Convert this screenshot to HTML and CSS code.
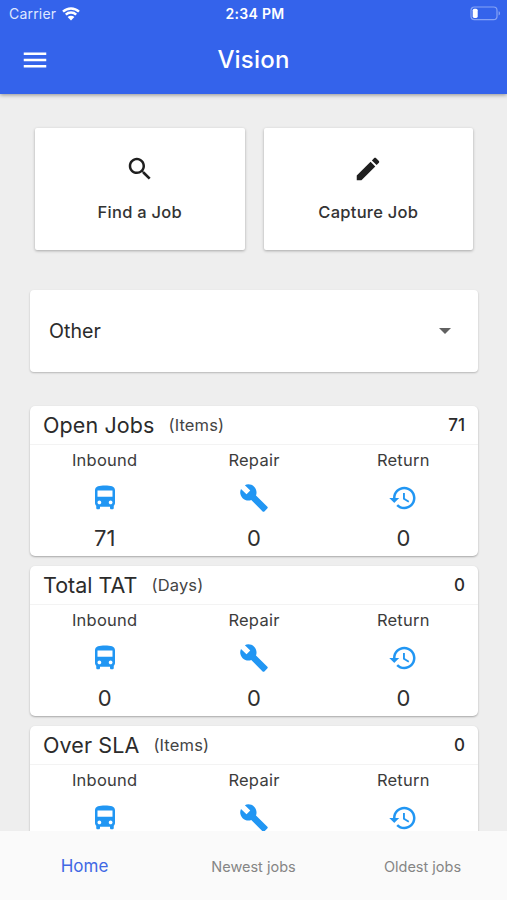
FILE: index.html
```
<!DOCTYPE html>
<html lang="en">
<head>
<meta charset="utf-8">
<title>Vision</title>
<link rel="stylesheet" href="styles.css">
</head>
<body>
<svg class="defs" aria-hidden="true">
  <symbol id="bus" viewBox="0 0 24 24"><path d="M4 16c0 .88.39 1.67 1 2.22V20c0 .55.45 1 1 1h1c.55 0 1-.45 1-1v-1h8v1c0 .55.45 1 1 1h1c.55 0 1-.45 1-1v-1.78c.61-.55 1-1.34 1-2.22V6c0-3.5-3.58-4-8-4s-8 .5-8 4v10zm3.5 1c-.83 0-1.5-.67-1.5-1.5S6.67 14 7.5 14s1.5.67 1.5 1.5S8.33 17 7.5 17zm9 0c-.83 0-1.5-.67-1.5-1.5s.67-1.5 1.5-1.5 1.5.67 1.5 1.5-.67 1.5-1.5 1.5zm1.5-6H6V6h12v5z"/></symbol>
  <symbol id="wrench" viewBox="0 0 24 24"><path d="M22.7 19l-9.1-9.1c.9-2.3.4-5-1.5-6.9-2-2-5-2.4-7.4-1.3L9 6 6 9 1.6 4.7C.4 7.1.9 10.1 2.9 12.1c1.9 1.9 4.6 2.4 6.9 1.5l9.1 9.1c.4.4 1 .4 1.4 0l2.3-2.3c.5-.4.5-1.1.1-1.4z"/></symbol>
  <symbol id="restore" viewBox="0 0 24 24"><path d="M13 3c-4.97 0-9 4.03-9 9H1l3.89 3.89.07.14L9 12H6c0-3.87 3.13-7 7-7s7 3.13 7 7-3.13 7-7 7c-1.93 0-3.68-.79-4.94-2.06l-1.42 1.42C8.27 19.99 10.51 21 13 21c4.97 0 9-4.03 9-9s-4.03-9-9-9zm-1 5v5l4.28 2.54.72-1.21-3.5-2.08V8H12z"/></symbol>
</svg>
<div class="app">
  <header class="top">
    <div class="status">
      <div class="carrier"><span>Carrier</span>
        <svg class="wifi" viewBox="0 0 18 14"><path d="M1 4.7A11.6 11.6 0 0 1 17 4.7M3.8 7.6a7.5 7.5 0 0 1 10.4 0" fill="none" stroke="#fff" stroke-width="2.4"/><path d="M9 13.6 5.6 10.1a4.9 4.9 0 0 1 6.8 0z" fill="#fff"/></svg>
      </div>
      <span class="time">2:34 PM</span>
      <svg class="battery" viewBox="0 0 31 15"><rect x="1" y="1" width="26" height="12.6" rx="3.4" fill="none" stroke="#86a3f5" stroke-width="1.2"/><rect x="2.7" y="2.7" width="5" height="9.2" rx="1.6" fill="#fff"/><path d="M28.6 5.3c1.9.6 1.9 3.6 0 4.2z" fill="#86a3f5"/></svg>
    </div>
    <div class="bar">
      <svg class="icon menu" viewBox="0 0 24 24"><path d="M3 18h18v-2H3v2zm0-5h18v-2H3v2zm0-7v2h18V6H3z"/></svg>
      <h1>Vision</h1>
    </div>
  </header>
  <main class="content">
    <div class="actions">
      <div class="action"><svg class="icon" viewBox="0 0 24 24"><path d="M15.5 14h-.79l-.28-.27C15.41 12.59 16 11.11 16 9.5 16 5.91 13.09 3 9.5 3S3 5.91 3 9.5 5.91 16 9.5 16c1.61 0 3.09-.59 4.23-1.57l.27.28v.79l5 4.99L20.49 19l-4.99-5zm-6 0C7.01 14 5 11.99 5 9.5S7.01 5 9.5 5 14 7.01 14 9.5 11.99 14 9.5 14z"/></svg><span class="find">Find a Job</span></div>
      <div class="action"><svg class="icon" viewBox="0 0 24 24"><path d="M3 17.25V21h3.75L17.81 9.94l-3.75-3.75L3 17.25zM20.71 7.04c.39-.39.39-1.02 0-1.41l-2.34-2.34c-.39-.39-1.02-.39-1.41 0l-1.83 1.83 3.75 3.75 1.83-1.83z"/></svg><span class="capture">Capture Job</span></div>
    </div>
    <div class="select"><span>Other</span><svg class="arrow" viewBox="0 0 12 6"><path d="M0 0h12L6 6z"/></svg></div>
    <div class="cards">
      <section class="card">
        <div class="head"><h2 class="open">Open Jobs</h2><span class="unit">(Items)</span><b>71</b></div>
        <div class="cols">
          <div class="col"><span>Inbound</span><svg class="icon"><use href="#bus"/></svg><em>71</em></div>
          <div class="col"><span>Repair</span><svg class="icon"><use href="#wrench"/></svg><em>0</em></div>
          <div class="col"><span>Return</span><svg class="icon"><use href="#restore"/></svg><em>0</em></div>
        </div>
      </section>
      <section class="card">
        <div class="head"><h2 class="tat">Total TAT</h2><span class="unit">(Days)</span><b>0</b></div>
        <div class="cols">
          <div class="col"><span>Inbound</span><svg class="icon"><use href="#bus"/></svg><em>0</em></div>
          <div class="col"><span>Repair</span><svg class="icon"><use href="#wrench"/></svg><em>0</em></div>
          <div class="col"><span>Return</span><svg class="icon"><use href="#restore"/></svg><em>0</em></div>
        </div>
      </section>
      <section class="card">
        <div class="head"><h2 class="sla">Over SLA</h2><span class="unit">(Items)</span><b>0</b></div>
        <div class="cols">
          <div class="col"><span>Inbound</span><svg class="icon"><use href="#bus"/></svg></div>
          <div class="col"><span>Repair</span><svg class="icon"><use href="#wrench"/></svg></div>
          <div class="col"><span>Return</span><svg class="icon"><use href="#restore"/></svg></div>
        </div>
      </section>
    </div>
  </main>
  <nav class="tabs"><span class="active">Home</span><span>Newest jobs</span><span>Oldest jobs</span></nav>
</div>
</body>
</html>
```
FILE: styles.css
```
* { box-sizing: border-box; }
body { margin: 0; font-family: Inter, "Liberation Sans", sans-serif; color: #2b2b2b; }
h1, h2 { margin: 0; font-weight: 400; }
.defs { display: none; }
.app { width: 507px; height: 900px; display: flex; flex-direction: column; overflow: hidden; background: #eee; }
.icon { width: 30px; height: 30px; display: block; fill: currentColor; flex: none; }

.top { flex: none; height: 94px; background: #3463eb; color: #fff; box-shadow: 0 1px 4px rgba(0,0,0,.4); }
.status { height: 27px; padding: 0 6px 0 9px; display: grid; grid-template-columns: 1fr auto 1fr; align-items: center; font-size: 14px; line-height: 27px; }
.carrier { display: flex; align-items: center; gap: 6px; color: #dfe7ff; letter-spacing: .2px; }
.wifi { width: 18px; height: 14px; }
.time { font-weight: 600; font-size: 14px; letter-spacing: .3px; }
.battery { width: 31px; height: 15px; justify-self: end; }
.bar { height: 66px; display: grid; grid-template-columns: 50px 1fr 50px; align-items: center; padding: 0 20px; }
.bar h1 { text-align: center; font-size: 24px; font-weight: 500; letter-spacing: .2px; line-height: 66px; }

.content { flex: 1; min-height: 0; overflow: hidden; padding: 34px 29px 0 30px; }
.actions { display: flex; gap: 19px; padding: 0 5px; }
.action { flex: 1; height: 122px; padding-top: 26px; display: flex; flex-direction: column; align-items: center; background: #fff; border-radius: 2px; box-shadow: 0 1px 3px rgba(0,0,0,.3); color: #1f1f1f; }
.action span { margin-top: 17px; font-size: 16.5px; font-weight: 500; line-height: 22px; letter-spacing: .25px; color: #333; }
.select { margin-top: 40px; height: 82px; padding: 0 27px 0 19px; display: flex; align-items: center; justify-content: space-between; background: #fff; border-radius: 4px; box-shadow: 0 1px 2px rgba(0,0,0,.24); font-size: 19.6px; }
.arrow { width: 12px; height: 6px; fill: #616161; }

.cards { margin-top: 34px; display: flex; flex-direction: column; gap: 10px; }
.card { height: 150px; background: #fff; border-radius: 5px; box-shadow: 0 1px 2px rgba(0,0,0,.3); }
.head { height: 39px; padding: 0 13px; display: flex; align-items: center; border-bottom: 1px solid #f3f3f3; line-height: 38px; }
.head h2 { font-size: 21.5px; letter-spacing: .1px; line-height: 40px; }
.head .tat { letter-spacing: 0; }
.unit { margin-left: 14px; font-size: 16.5px; color: #444; letter-spacing: .15px; }
.head b { margin-left: auto; font-size: 17px; font-weight: 500; }
.cols { display: grid; grid-template-columns: repeat(3, 1fr); }
.col { display: flex; flex-direction: column; align-items: center; color: #2196f3; }
.col span { margin-top: 4px; font-size: 16.5px; line-height: 22px; letter-spacing: .25px; color: #3c3c3c; }
.col .icon { margin-top: 12px; }
.col em { margin-top: 11px; font-style: normal; font-size: 22px; line-height: 28px; color: #2f2f2f; }

.tabs { flex: none; position: relative; height: 69px; display: grid; grid-template-columns: repeat(3, 169px); text-align: center; line-height: 72px; background: #fafafa; font-size: 14.5px; color: #858585; }
.tabs .active { font-size: 17px; line-height: 70px; color: #4068e4; }
```
